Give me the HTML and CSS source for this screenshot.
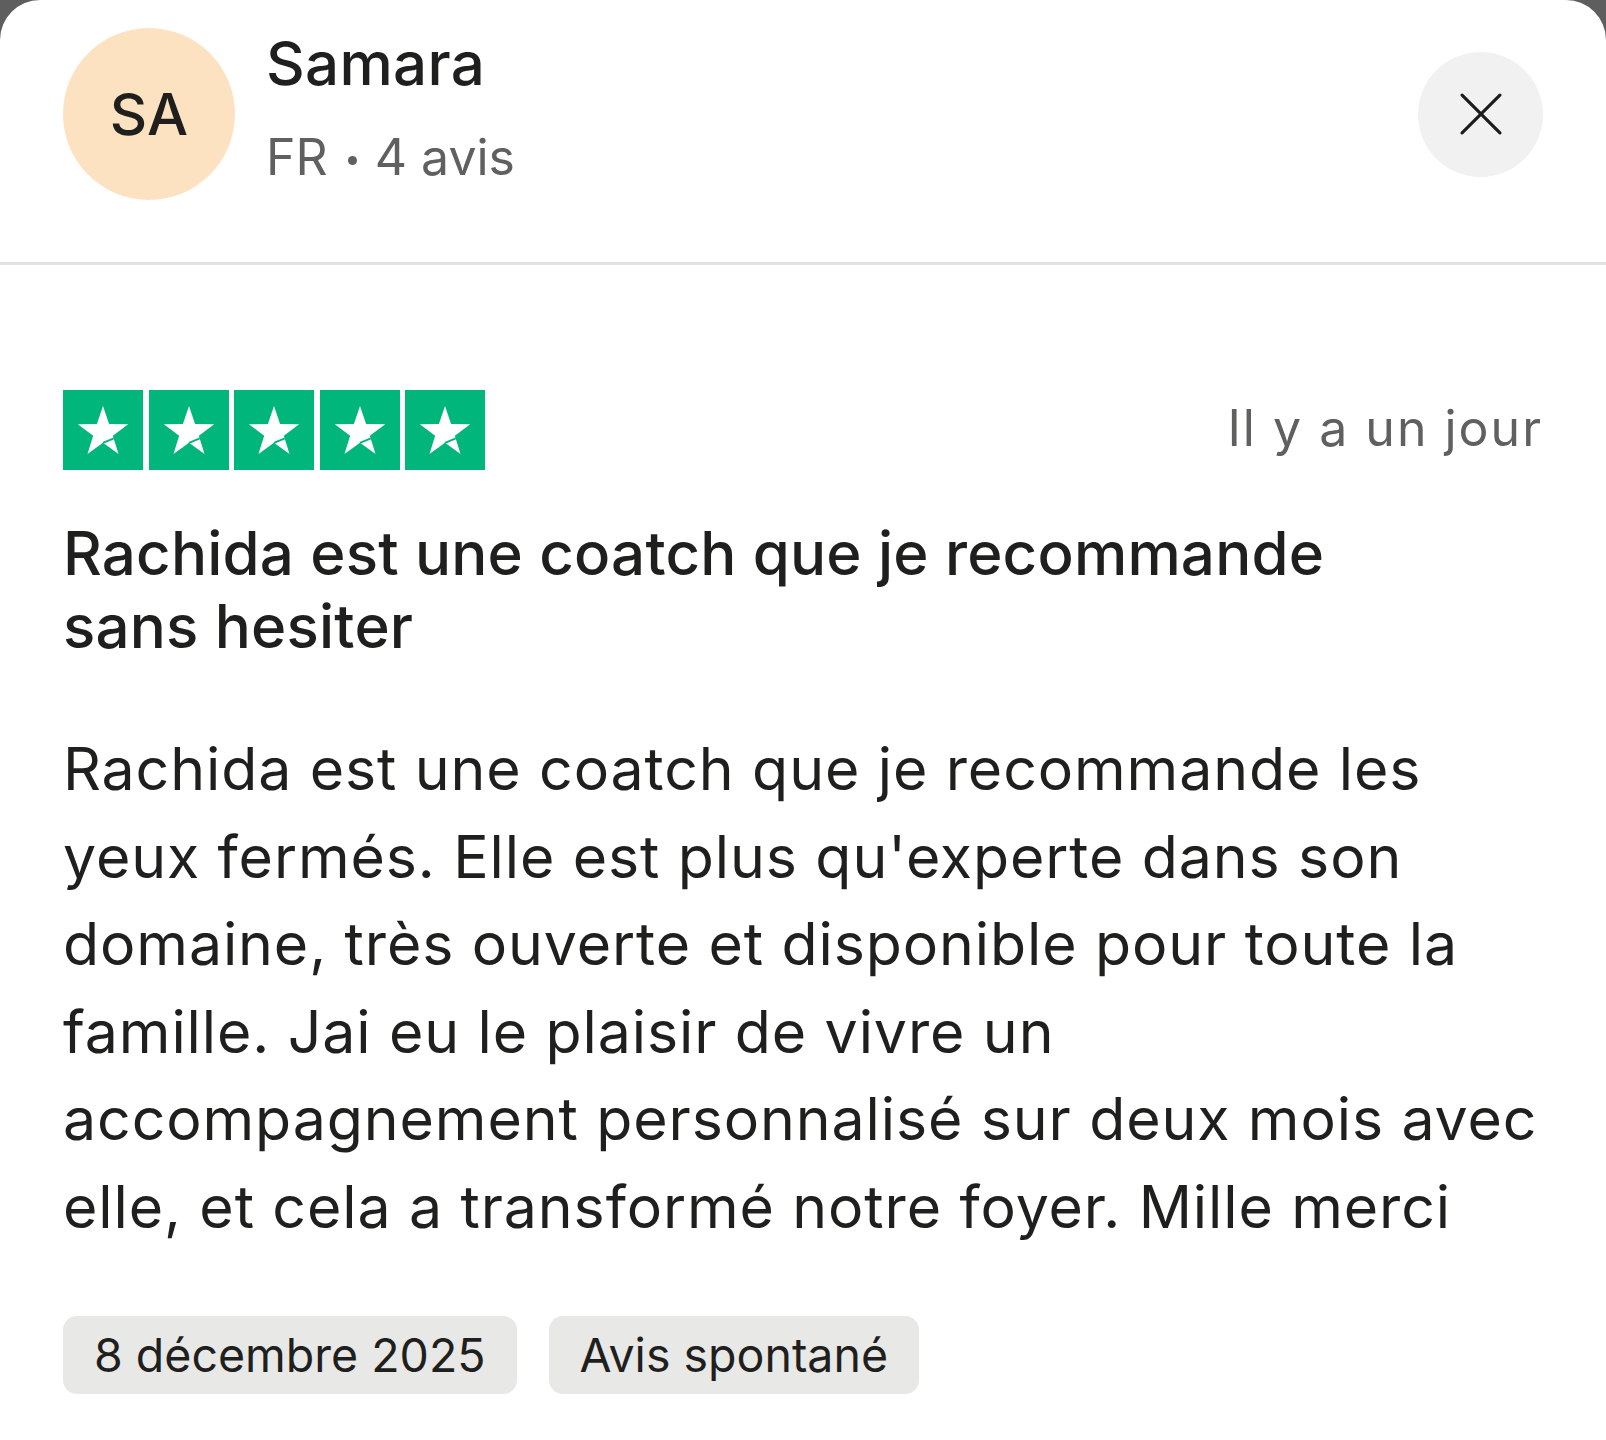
FILE: index.html
```html
<!DOCTYPE html>
<html lang="fr">
<head>
<meta charset="utf-8">
<title>Avis - Samara</title>
<link rel="stylesheet" href="styles.css">
</head>
<body>
<div class="card">
  <header class="header">
    <div class="avatar">SA</div>
    <div class="who">
      <div class="name">Samara</div>
      <div class="meta">FR <span class="dot"></span> 4 avis</div>
    </div>
    <button class="close" aria-label="Fermer">
      <svg viewBox="0 0 40 40" width="42" height="42"><path d="M2 2 L38 38 M38 2 L2 38" stroke="#1c1c1a" stroke-width="3" stroke-linecap="round" fill="none"/></svg>
    </button>
  </header>
  <main class="review">
    <div class="top-row">
      <div class="stars">
        <span class="star"><svg viewBox="0 0 100 100"><polygon points="50,20 57.6,42.6 81.5,42.8 62.3,57.1 69.4,79.9 50,66 30.6,79.9 37.7,57.1 18.5,42.8 42.4,42.6" fill="#fff"/><path d="M50 66 L63.5 60.5" stroke="#00b67a" stroke-width="2.4"/></svg></span>
        <span class="star"><svg viewBox="0 0 100 100"><polygon points="50,20 57.6,42.6 81.5,42.8 62.3,57.1 69.4,79.9 50,66 30.6,79.9 37.7,57.1 18.5,42.8 42.4,42.6" fill="#fff"/><path d="M50 66 L63.5 60.5" stroke="#00b67a" stroke-width="2.4"/></svg></span>
        <span class="star"><svg viewBox="0 0 100 100"><polygon points="50,20 57.6,42.6 81.5,42.8 62.3,57.1 69.4,79.9 50,66 30.6,79.9 37.7,57.1 18.5,42.8 42.4,42.6" fill="#fff"/><path d="M50 66 L63.5 60.5" stroke="#00b67a" stroke-width="2.4"/></svg></span>
        <span class="star"><svg viewBox="0 0 100 100"><polygon points="50,20 57.6,42.6 81.5,42.8 62.3,57.1 69.4,79.9 50,66 30.6,79.9 37.7,57.1 18.5,42.8 42.4,42.6" fill="#fff"/><path d="M50 66 L63.5 60.5" stroke="#00b67a" stroke-width="2.4"/></svg></span>
        <span class="star"><svg viewBox="0 0 100 100"><polygon points="50,20 57.6,42.6 81.5,42.8 62.3,57.1 69.4,79.9 50,66 30.6,79.9 37.7,57.1 18.5,42.8 42.4,42.6" fill="#fff"/><path d="M50 66 L63.5 60.5" stroke="#00b67a" stroke-width="2.4"/></svg></span>
      </div>
      <div class="when">Il y a un jour</div>
    </div>
    <h1 class="title">Rachida est une coatch que je recommande sans hesiter</h1>
    <p class="text">Rachida est une coatch que je recommande les yeux fermés. Elle est plus qu'experte dans son domaine, très ouverte et disponible pour toute la famille. Jai eu le plaisir de vivre un accompagnement personnalisé sur deux mois avec elle, et cela a transformé notre foyer. Mille merci</p>
    <div class="tags">
      <span class="tag">8 décembre 2025</span>
      <span class="tag">Avis spontané</span>
    </div>
  </main>
</div>
</body>
</html>
```

FILE: styles.css
```css
* { box-sizing: border-box; }
html, body { margin: 0; padding: 0; }
body {
  background: #5e5e5e;
  font-family: Inter, "Noto Sans", Roboto, sans-serif;
  color: #1f1f1d;
}
.card {
  background: #fff;
  border-radius: 40px 40px 0 0;
  min-height: 1440px;
  width: 1606px;
}
.header {
  display: flex;
  align-items: center;
  padding: 28px 63px 62px 63px;
  border-bottom: 3px solid #e2e2e0;
}
.avatar {
  width: 172px;
  height: 172px;
  border-radius: 50%;
  background: #fde2c2;
  display: flex;
  align-items: center;
  justify-content: center;
  font-size: 58px;
  font-weight: 500;
  color: #1f1f1d;
  flex: none;
}
.who {
  margin-left: 31px;
  flex: 1;
  display: flex;
  flex-direction: column;
  gap: 28px;
  margin-top: -14px;
}
.name {
  font-size: 60px;
  font-weight: 500;
  line-height: 72px;
  letter-spacing: 0.3px;
}
.meta {
  font-size: 50px;
  color: #60605e;
  line-height: 60px;
  display: flex;
  align-items: center;
}
.dot {
  display: inline-block;
  width: 9px;
  height: 9px;
  border-radius: 50%;
  background: #60605e;
  margin: 6px 18px 0 20px;
}
.close {
  width: 125px;
  height: 125px;
  border-radius: 50%;
  border: none;
  background: #f1f1f1;
  display: flex;
  align-items: center;
  justify-content: center;
  padding: 0;
  flex: none;
}
.review {
  padding: 125px 63px 0 63px;
}
.top-row {
  display: flex;
  justify-content: space-between;
  align-items: center;
}
.stars {
  display: flex;
  gap: 5.5px;
}
.star {
  width: 80px;
  height: 80px;
  background: #00b67a;
  display: block;
}
.star svg { width: 80px; height: 80px; display: block; }
.when {
  font-size: 50px;
  color: #60605e;
  letter-spacing: 2px;
  margin-top: -4px;
}
.title {
  margin: 47px 0 0 0;
  font-size: 60px;
  font-weight: 550;
  line-height: 73px;
  max-width: 1340px;
  letter-spacing: 0.2px;
}
.text {
  margin: 62px 0 0 0;
  font-size: 59px;
  line-height: 87.5px;
  font-weight: 400;
  letter-spacing: 0.9px;
}
.tags {
  display: flex;
  gap: 32px;
  margin-top: 66px;
}
.tag {
  background: #e8e8e7;
  border-radius: 14px;
  height: 78px;
  padding: 0 31px;
  display: flex;
  align-items: center;
  font-size: 46.5px;
}
```
